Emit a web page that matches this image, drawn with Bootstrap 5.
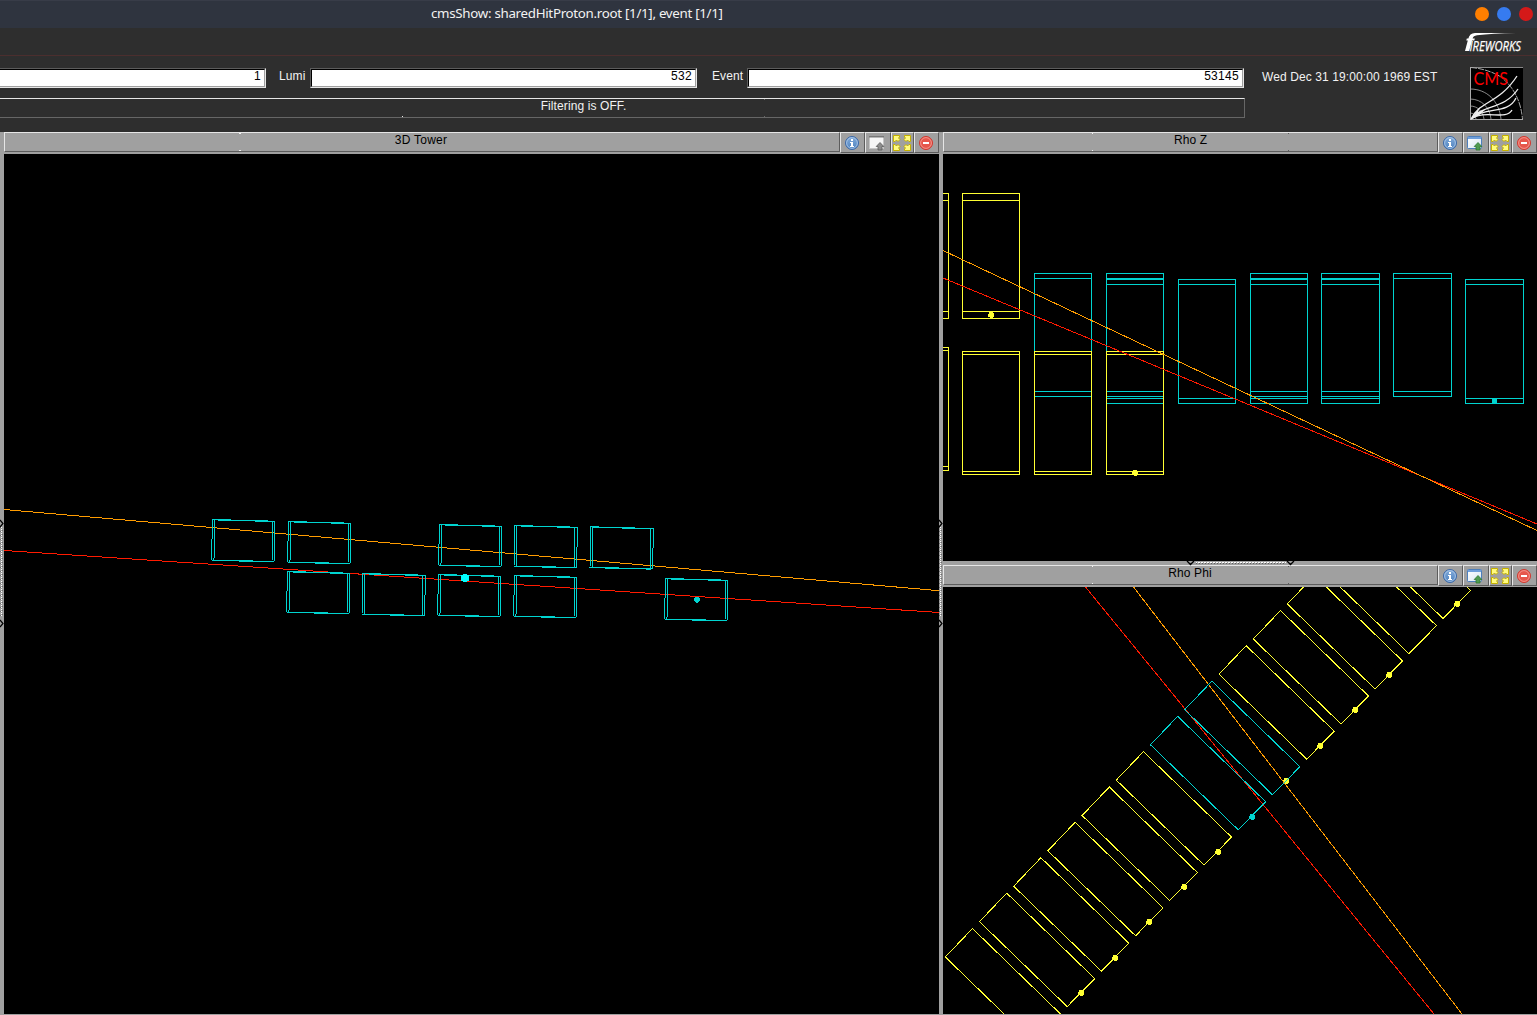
<!DOCTYPE html>
<html lang="en">
<head>
<meta charset="utf-8">
<meta name="viewport" content="width=device-width, initial-scale=1">
<title>cmsShow: sharedHitProton.root [1/1], event [1/1]</title>
<link rel="stylesheet" href="https://cdn.jsdelivr.net/npm/bootstrap@5.3.0/dist/css/bootstrap.min.css">
<style>
  html, body { height: 100%; }
  body { background: #2e2e2e; color: #f2f2f2; font: 12px/14px "Liberation Sans", Arial, sans-serif; letter-spacing: .1px; height: 1015px; }
  svg { display: block; flex: none; }
  .title-bar { height: 28px; background: #2f343f; border-top: 1px solid #383c48; font: 13.33px/25px "Noto Sans", sans-serif; letter-spacing: -.3px; padding-left: 431px; padding-right: 4px; }
  .title-bar .caption { width: 292px; white-space: nowrap; }
  .win-dots { padding-bottom: 2px; }
  .win-dot { width: 14px; height: 14px; border-radius: 50%; }
  .menu-strip { height: 28px; border-bottom: 1px solid #4b2e2e; padding: 4px 13px 0 0; }
  .info-area { height: 76px; }
  .entry { height: 20px; border: 1px solid #e6e6e6; border-top-color: #5c5c5c; border-left-color: #5c5c5c; }
  .entry > div { height: 18px; background: #fff; color: #000; border: 1px solid #a0a0a0; border-top-color: #000; border-left-color: #000; text-align: right; padding-right: 3px; line-height: 13px; letter-spacing: .3px; }
  .entry-run > div { border-left: 0; } .entry-run { border-left: 0; }
  .e1 { width: 266px; } .e2 { width: 387px; } .e3 { width: 497px; }
  .l1, .l2 { line-height: 16px; }
  .l1 { width: 44px; padding-left: 13px; } .l2 { width: 50px; padding-left: 15px; }
  .filter-frame { width: 1245px; height: 20px; margin-top: 10px; border: 1px solid #666; border-left: 0; border-top-color: #e6e6e6; line-height: 15px; padding-right: 77px; text-align: center;
    background: linear-gradient(#e6e6e6,#e6e6e6) 402px 17px/1px 1px no-repeat, linear-gradient(#666,#666) 764px 0/1px 1px no-repeat, linear-gradient(#666,#666) 764px 17px/1px 1px no-repeat; }
  .work { height: 883px; background: #a0a0a0; padding-bottom: 1px; }
  .strip-v { width: 4px; flex: none; position: relative; }
  .strip-h { height: 4px; flex: none; position: relative; }
  .grip { position: absolute; left: 0; top: 0; overflow: visible; }
  .pane-left { width: 935px; } .pane-right { width: 594px; }
  .pane-head { height: 22px; flex: none; border-bottom: 1px solid #a0a0a0; }
  .pane-name { height: 20px; border: 1px solid #5c5c5c; border-top-color: #e6e6e6; border-left-color: #e6e6e6; color: #000; text-align: center; line-height: 14px; }
  .tick-a { background: linear-gradient(#f2f2f2,#f2f2f2) 234px 0/2px 1px no-repeat, linear-gradient(#f2f2f2,#f2f2f2) 234px 17px/2px 1px no-repeat; padding-right: 2px; letter-spacing: .25px; }
  .tick-b { background: linear-gradient(#f2f2f2,#f2f2f2) 148px 0/1px 1px no-repeat, linear-gradient(#f2f2f2,#f2f2f2) 148px 17px/1px 1px no-repeat, linear-gradient(#5c5c5c,#5c5c5c) 344px 0/1px 1px no-repeat, linear-gradient(#5c5c5c,#5c5c5c) 344px 17px/1px 1px no-repeat; }
  .tools { width: 99px; flex: none; }
  .tool { flex: 1 1 0; min-width: 0; height: 21px; border: 1px solid #5c5c5c; border-top-color: #e6e6e6; border-left-color: #e6e6e6; border-radius: 0; background: #a0a0a0; padding: 1px 0 0 3px; }
  .tool-wide { padding-left: 1px; }
  .scene { background: #000; shape-rendering: crispEdges; fill: none; stroke-width: 1; }
  .cy { stroke: #00d4d0; } .ye { stroke: #ffff33; } .og { stroke: #ff9c00; } .rd { stroke: #ff1a00; }
  .fcy { fill: #00d4d0; } .fye { fill: #ffff33; }
</style>
<script src="https://cdn.jsdelivr.net/npm/bootstrap@5.3.0/dist/js/bootstrap.bundle.min.js"></script>
</head>
<body class="m-0 overflow-hidden">

<!-- shared icon and geometry definitions -->
<svg width="0" height="0" class="position-absolute">
  <defs>
    <linearGradient id="gBlue" x2="0" y2="1"><stop stop-color="#83abd9"/><stop offset="1" stop-color="#4d82c0"/></linearGradient>
    <linearGradient id="gWin" x2="1" y2="1"><stop stop-color="#fff"/><stop offset="1" stop-color="#d8e6f2"/></linearGradient>
    <symbol id="icoInfo" viewBox="0 0 16 16">
      <circle cx="8" cy="8" r="6.5" fill="url(#gBlue)" stroke="#3a68a8"/><circle cx="8" cy="8" r="5.4" fill="none" stroke="#b4cdea" stroke-width=".8"/>
      <path d="M7 4h2v2H7zM6 7h3v4h1v1H6v-1h1V8H6z" fill="#fff"/>
    </symbol>
    <symbol id="icoWin" viewBox="0 0 16 16">
      <rect x=".5" y="1.500" width="14" height="12" rx=".8" fill="url(#gWin)" stroke="#4d7fbc"/><path d="M1 2h13v2H1z" fill="#6f9fdb"/>
      <path d="M11 7.500 14.800 11.500H13V15H9V11.500H7.200z" fill="#4f9a50" stroke="#2f7a34" stroke-width=".8"/>
    </symbol>
    <symbol id="icoWinOff" viewBox="0 0 16 16">
      <rect x=".5" y="1.500" width="14" height="12" fill="#f5f5f5" stroke="#c4c4c4"/><path d="M0 1h15v1.500H0z" fill="#777"/>
      <path d="M11 7.500 14.800 11.500H13V15H9V11.500H7.200z" fill="#8c8c8c" stroke="#5c5c5c" stroke-width=".8"/>
    </symbol>
    <symbol id="icoExpand" viewBox="0 0 18 16">
      <g fill="#fffb80" stroke="#c4b000"><path id="ar" d="M.5 .5H6.500V2L5.500 3 7 4.500 5 6.500 3.500 5 2 6.500H.5z"/>
      <use href="#ar" transform="matrix(-1 0 0 1 18 0)"/><use href="#ar" transform="matrix(1 0 0 -1 0 16)"/><use href="#ar" transform="matrix(-1 0 0 -1 18 16)"/></g>
    </symbol>
    <symbol id="icoStop" viewBox="0 0 16 16">
      <circle cx="8" cy="8" r="6.500" fill="#e6574c" stroke="#d2382f"/><circle cx="8" cy="8" r="5.400" fill="none" stroke="#f6a59d" stroke-width=".8"/><path d="M5 7h6v2H5z" fill="#fff"/>
    </symbol>
    <g id="tower"><path d="M1.500 .5 64 2.200 63 42.500 .5 41zM3.500 .9 61.500 2.500 61 42.800 3 41.400z"/></g>
    <path id="slab" d="M945.300 957 972.500 928.500 1060.500 1014 1033 1042z"/>
    <path id="hit" d="M-2-3H2V-2H3V2H2V3H-1V2H-3V-1H-2z" stroke="none"/>
    <pattern id="dotsV" width="4" height="4" patternUnits="userSpaceOnUse" y="1"><path d="M1 0h1v1H1z" fill="#fff"/><path d="M2 1h1v1H2zM0 2h1v1H0z" fill="#5c5c5c" opacity=".7"/><path d="M1 2h1v1H1z" fill="#fff"/></pattern>
    <pattern id="dotsH" width="3" height="4" patternUnits="userSpaceOnUse"><path d="M0 1h2v1H0z" fill="#fff"/><path d="M1 2h1v1H1z" fill="#5c5c5c"/></pattern>
  </defs>
</svg>

<header class="title-bar d-flex justify-content-between">
  <div class="caption">cmsShow: sharedHitProton.root [1/1], event [1/1]</div>
  <div class="win-dots d-flex gap-2 align-items-center">
    <span class="win-dot" style="background:#ff7f00"></span><span class="win-dot" style="background:#367bf0"></span><span class="win-dot" style="background:#d41919"></span>
  </div>
</header>

<div class="menu-strip d-flex justify-content-end">
  <svg width="60" height="23" viewBox="0 0 60 23" fill="#fff" overflow="visible">
    <path d="M1 19 4.200 7Q5.500 1 11 1H52Q28 1.500 13 3.200 9.200 3.800 8.600 6.500H10.800L10.300 8.500H8L5.200 19zM2.800 6.500H5V8.500H2.300z"/>
    <text x="5.500" y="18.500" font-family="Open Sans, sans-serif" font-size="14" font-weight="500" letter-spacing="0" font-style="italic" stroke="#fff" stroke-width=".25" textLength="51.500" lengthAdjust="spacingAndGlyphs">IREWORKS</text>
  </svg>
</div>

<section class="info-area d-flex">
  <div>
    <div class="d-flex" style="padding-top:12px">
      <div class="entry entry-run e1"><div>1</div></div>
      <div class="l1">Lumi</div>
      <div class="entry e2"><div>532</div></div>
      <div class="l2">Event</div>
      <div class="entry e3"><div>53145</div></div>
    </div>
    <div class="filter-frame">Filtering is OFF.</div>
  </div>
  <div class="text-nowrap" style="padding:14px 0 0 17px;width:225px">Wed Dec 31 19:00:00 1969 EST</div>
  <svg width="53" height="53" viewBox="0 0 53 53" style="margin-top:11px" fill="none">
    <path d="M0 0H53V53H0z" fill="#000"/>
    <g stroke="#aaa"><path d="M.5 0V53M0 52.500H53"/><path d="M1 .5Q18 2 31 10 50 25 52.500 52" stroke-dasharray="6 1"/>
      <path d="M0 22C17 22 29 34 31 52M0 32C12 32 20 41 21 52M0 39C8 39 13 45 14 52M0 46Q5 46 6 52M0 .5H53" opacity=".8"/></g>
    <g stroke="#eee" stroke-width="1.300"><path d="M1 52C9 34 29 37 47 9M1 52C13 37 34 43 48 22M1 52C15 39 38 48 46 31M1 52C15 42 36 54 42 43"/></g>
    <path d="M0 53 10 40 8 45 16 42 8 49z" fill="#eee"/>
    <text x="3.500" y="18" fill="#f00" font-family="Lato, sans-serif" font-size="16.500" letter-spacing="0" textLength="34.500" lengthAdjust="spacingAndGlyphs">CMS</text>
  </svg>
</section>

<main class="work d-flex">
  <div class="strip-v">
    <svg class="grip" width="4" height="882"><rect y="395" width="4" height="90" fill="url(#dotsV)"/><path d="M0 388 3 391.500 0 395M0 488 3 491.500 0 495" fill="none" stroke="#000" stroke-width="1.200"/></svg>
  </div>

  <section class="pane-left d-flex flex-column">
    <div class="pane-head d-flex">
      <div class="pane-name tick-a flex-grow-1">3D Tower</div>
      <div class="tools d-flex">
        <button class="tool btn"><svg width="16" height="16"><use href="#icoInfo"/></svg></button>
        <button class="tool btn"><svg width="16" height="16"><use href="#icoWinOff"/></svg></button>
        <button class="tool tool-wide btn"><svg width="18" height="16"><use href="#icoExpand"/></svg></button>
        <button class="tool btn"><svg width="16" height="16"><use href="#icoStop"/></svg></button>
      </div>
    </div>
    <svg class="scene" width="935" height="860" viewBox="4 154 935 860">
      <path class="og" d="M4 509.500 939 590.700"/><path class="rd" d="M4 550.500 939 612.500"/>
      <g class="cy">
        <use href="#tower" x="211" y="519"/><use href="#tower" x="287" y="521"/><use href="#tower" x="438" y="524"/><use href="#tower" x="513.500" y="525"/><use href="#tower" x="589.500" y="526.300"/>
        <use href="#tower" x="286" y="571"/><use href="#tower" x="361.500" y="573"/><use href="#tower" x="437" y="574"/><use href="#tower" x="513" y="575"/><use href="#tower" x="664" y="578"/>
      </g>
      <path fill="#00ffff" d="M463 574h4v1h2v6h-2v1h-4v-1h-2v-6h2z"/>
      <path class="fcy" d="M695 597h4v1h1v3h-1v1h-1v1h-2v-1h-1v-1h-1v-3h1z"/>
    </svg>
  </section>

  <div class="strip-v">
    <svg class="grip" width="4" height="882"><rect y="395" width="4" height="90" fill="url(#dotsV)"/><path d="M0 388 3 391.500 0 395M0 488 3 491.500 0 495" fill="none" stroke="#000" stroke-width="1.200"/></svg>
  </div>

  <div class="pane-right d-flex flex-column">
    <section>
      <div class="pane-head d-flex">
        <div class="pane-name tick-b flex-grow-1">Rho Z</div>
        <div class="tools d-flex">
          <button class="tool btn"><svg width="16" height="16"><use href="#icoInfo"/></svg></button>
          <button class="tool btn"><svg width="16" height="16"><use href="#icoWin"/></svg></button>
          <button class="tool tool-wide btn"><svg width="18" height="16"><use href="#icoExpand"/></svg></button>
          <button class="tool btn"><svg width="16" height="16"><use href="#icoStop"/></svg></button>
        </div>
      </div>
      <svg class="scene" width="594" height="407" viewBox="943 154 594 407">
        <g class="cy">
          <path d="M1034.500 273.500h57v123h-57zM1034 278.500h58M1034 391.500h58"/>
          <path id="dbl" d="M1106.500 273.500h57v130h-57zM1106 278.500h58M1106 279.500h58M1106 284.500h58M1106 391.500h58M1106 396.500h58M1106 398.500h58"/>
          <path d="M1178.500 279.500h57v124h-57zM1178 284.500h58M1178 398.500h58"/>
          <use href="#dbl" x="144"/>
          <path d="M1321.500 273.500h58v130h-58zM1321 278.500h59M1321 279.500h59M1321 284.500h59M1321 391.500h59M1321 396.500h59M1321 398.500h59"/>
          <path d="M1393.500 273.500h58v123h-58zM1393 278.500h59M1393 391.500h59"/>
          <path d="M1465.500 279.500h58v124h-58zM1465 284.500h59M1465 398.500h59"/>
        </g>
        <g class="ye">
          <path d="M943 193.500h5.500v125H943M943 200.500h6M943 311.500h6M943 347.500h5.500v123H943M943 350.500h6M943 466.500h6"/>
          <path d="M962.500 193.500h57v125h-57zM962 200.500h58M962 311.500h58"/>
          <path d="M962.500 351.500h57v123h-57zM962 354.500h58M962 471.500h58"/>
          <path d="M1034.500 351.500h57v123h-57zM1034 354.500h58M1034 471.500h58"/>
          <path d="M1106.500 351.500h57v123h-57zM1106 354.500h58M1106 471.500h58"/>
        </g>
        <path class="rd" d="M943 278 1537 524"/><path class="og" d="M943 250.500 1537 530.500"/>
        <use href="#hit" class="fye" x="991" y="315"/><use href="#hit" class="fye" x="1135" y="473"/>
        <path class="fcy" d="M1492 399h5v4h-5z"/>
      </svg>
    </section>

    <div class="strip-h">
      <svg class="grip" width="594" height="5"><rect x="253" width="90" height="4" fill="url(#dotsH)"/><path d="M244 0 247.500 3.500 251 0M344 0 347.500 3.500 351 0" fill="none" stroke="#000" stroke-width="1.300"/></svg>
    </div>

    <section>
      <div class="pane-head d-flex">
        <div class="pane-name tick-b flex-grow-1" style="padding-right:1px">Rho Phi</div>
        <div class="tools d-flex">
          <button class="tool btn"><svg width="16" height="16"><use href="#icoInfo"/></svg></button>
          <button class="tool btn"><svg width="16" height="16"><use href="#icoWin"/></svg></button>
          <button class="tool tool-wide btn"><svg width="18" height="16"><use href="#icoExpand"/></svg></button>
          <button class="tool btn"><svg width="16" height="16"><use href="#icoStop"/></svg></button>
        </div>
      </div>
      <svg class="scene" width="594" height="427" viewBox="943 587 594 427">
        <g class="ye">
          <use href="#slab"/><use href="#slab" x="34.200" y="-35.400"/><use href="#slab" x="68.400" y="-70.800"/><use href="#slab" x="102.600" y="-106.200"/>
          <use href="#slab" x="136.800" y="-141.500"/><use href="#slab" x="171" y="-176.900"/>
          <use href="#slab" x="273.700" y="-282.800"/><use href="#slab" x="308" y="-318"/><use href="#slab" x="342" y="-353"/><use href="#slab" x="376" y="-388.300"/><use href="#slab" x="410" y="-423.500"/>
        </g>
        <g class="fye">
          <use href="#hit" x="1081" y="993"/><use href="#hit" x="1115" y="958"/><use href="#hit" x="1149" y="922"/><use href="#hit" x="1184" y="887"/><use href="#hit" x="1218" y="852"/>
          <use href="#hit" x="1286" y="781"/><use href="#hit" x="1320" y="746"/><use href="#hit" x="1355" y="710"/><use href="#hit" x="1389" y="675"/><use href="#hit" x="1457" y="604"/>
        </g>
        <path class="rd" d="M1085.500 587 1434 1014"/><path class="og" d="M1133.500 587 1462 1014"/>
        <g class="cy"><use href="#slab" x="205.200" y="-212.200"/><use href="#slab" x="239.400" y="-247.300"/></g>
        <use href="#hit" class="fcy" x="1252" y="817"/>
      </svg>
    </section>
  </div>
</main>
</body>
</html>
